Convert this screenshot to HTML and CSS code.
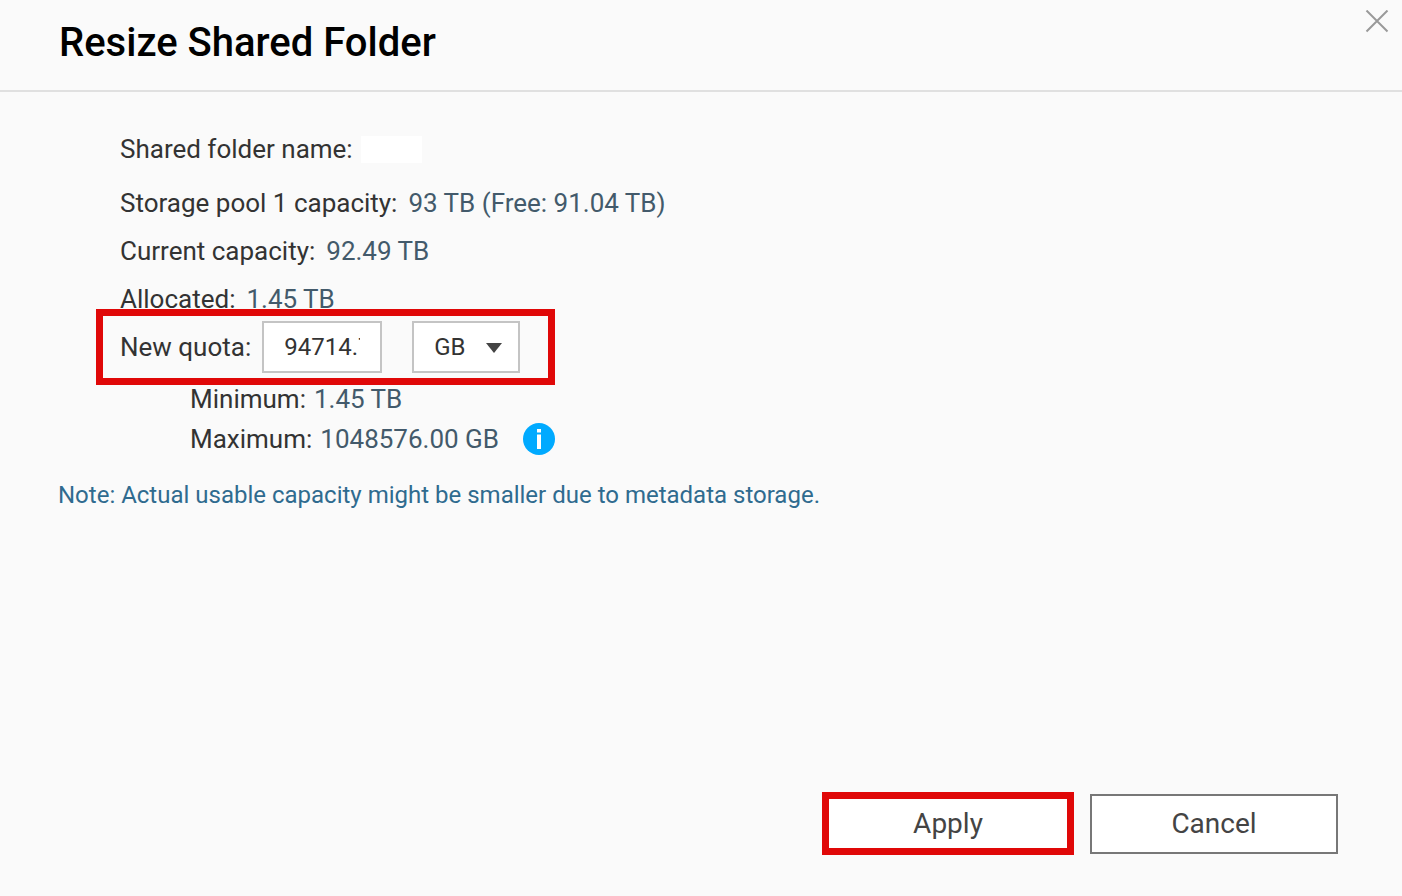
FILE: index.html
```
<!DOCTYPE html>
<html lang="en">

<head>
    <meta charset="UTF-8">
    <meta name="viewport" content="width=device-width, initial-scale=1.0">
    <title>Resize Shared Folder</title>
    <link rel="stylesheet" href="styles.css">
</head>

<body>
    <form class="dialog">
        <header class="dialog-header">
            <h1>Resize Shared Folder</h1>
            <button type="button" class="close" aria-label="Close">
                <svg width="24" height="24" viewBox="0 0 24 24">
                    <path d="M1.5 0.5L22.5 21.5M22.5 0.5L1.5 21.5" />
                </svg>
            </button>
        </header>

        <main class="content">
            <div class="row name-row">Shared folder name: <span class="folder-name"></span></div>
            <div class="row">Storage pool 1 capacity: <span class="value">93 TB (Free: 91.04 TB)</span></div>
            <div class="row">Current capacity: <span class="value">92.49 TB</span></div>
            <div class="row">Allocated: <span class="value">1.45 TB</span></div>
            <div class="row quota">
                <label for="quota">New quota:</label>
                <input type="text" id="quota" value="94714.7">
                <div class="unit">
                    <select aria-label="Unit">
                        <option>GB</option>
                        <option>TB</option>
                    </select>
                    <svg class="arrow" width="16" height="10" viewBox="0 0 16 10">
                        <path d="M0 0H16L8 10Z" />
                    </svg>
                </div>
            </div>
            <div class="limits">
                <div class="limit">Minimum: <span class="value">1.45 TB</span></div>
                <div class="limit">Maximum: <span class="value">1048576.00 GB</span>
                    <button type="button" class="info" aria-label="Information">
                        <svg width="32" height="32" viewBox="0 0 32 32">
                            <circle cx="16" cy="16" r="16" fill="#00aaff" />
                            <path d="M14 6H18V9.5H14ZM14 11.5H18V26H14Z" fill="#fff" />
                        </svg>
                    </button>
                </div>
            </div>
            <p class="note">Note: Actual usable capacity might be smaller due to metadata storage.</p>
        </main>

        <footer class="actions">
            <button type="submit" class="apply">Apply</button>
            <button type="button" class="cancel">Cancel</button>
        </footer>
    </form>
</body>

</html>
```
FILE: styles.css
```
:root {
    --text-color: #333;
    --value-color: #435a6b;
    --note-color: #2f6b8f;
    --highlight: #e00808;
}

*,
*::after {
    margin: 0;
    padding: 0;
    box-sizing: border-box;
    font-family: Roboto, "Liberation Sans", sans-serif;
}

body {
    background-color: #fafafa;
    color: var(--text-color);
    font-size: 26px;
}

.dialog {
    display: flex;
    flex-direction: column;
    min-height: 100vh;
}

.dialog-header {
    display: flex;
    justify-content: space-between;
    align-items: flex-start;
    padding: 10px 13px 14px 59px;
    border-bottom: 2px solid #e0e0e0;
}

h1 {
    font-size: 40px;
    font-weight: 500;
    line-height: 66px;
    color: #000;
}

.close,
.info {
    display: block;
    border: none;
    background: none;
    cursor: pointer;
}

.close svg,
.info svg {
    display: block;
}

.close path {
    stroke: #999;
    stroke-width: 2;
    fill: none;
}

.content {
    padding: 30px 58px 0;
}

.row {
    display: flex;
    align-items: center;
    gap: 11px;
    height: 48px;
    padding-left: 62px;
}

.name-row {
    gap: 8px;
    height: 54px;
    margin-bottom: 3px;
}

.value {
    color: var(--value-color);
}

.folder-name {
    width: 61px;
    height: 27px;
    background-color: #fff;
}

.quota {
    position: relative;
}

/* red frame round the quota fields */
.quota::after {
    content: "";
    position: absolute;
    top: -14px;
    left: 38px;
    width: 459px;
    height: 76px;
    border: 7px solid var(--highlight);
    pointer-events: none;
}

.quota input,
.quota select {
    height: 52px;
    border: 2px solid #c4c4c4;
    background-color: #fff;
    color: var(--text-color);
    font-size: 24px;
}

.quota input {
    width: 120px;
    padding: 0 20px;
}

.unit {
    position: relative;
    margin-left: 19px;
}

.quota select {
    display: block;
    width: 108px;
    padding-left: 20px;
    appearance: none;
}

.arrow {
    position: absolute;
    top: 22px;
    right: 18px;
    fill: #444;
    pointer-events: none;
}

.limits {
    padding: 8px 0 0 132px;
}

.limit {
    display: flex;
    align-items: center;
    gap: 8px;
    height: 40px;
}

.info {
    margin-left: 16px;
}

.note {
    padding-top: 20px;
    font-size: 24px;
    line-height: 32px;
    color: var(--note-color);
}

.actions {
    display: flex;
    justify-content: flex-end;
    align-items: center;
    gap: 16px;
    margin-top: auto;
    padding: 24px 64px 41px;
}

.actions button {
    width: 248px;
    height: 60px;
    border: 2px solid #777;
    background-color: #fff;
    color: #444;
    font-size: 28px;
    cursor: pointer;
}

.actions .apply {
    width: 252px;
    height: 63px;
    border: 7px solid var(--highlight);
}
```
